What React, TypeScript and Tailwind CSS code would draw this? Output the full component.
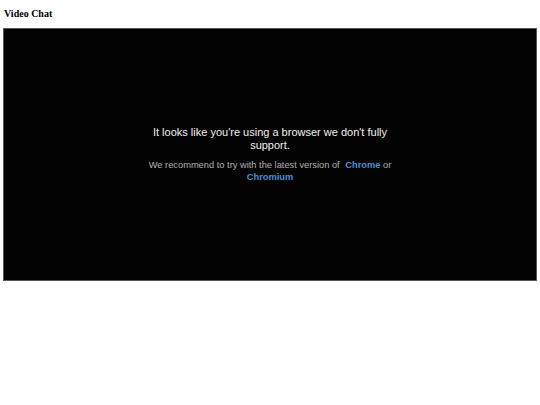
export default function App() {
  return (
    <div className="bg-white w-[540px] h-[405px] px-[3px]" style={{ fontFamily: '"Liberation Serif", serif' }}>
      <h1 className="text-[10px] font-bold text-black h-[28px] pt-[8px] leading-[12px] pl-[1px]">Video Chat</h1>
      <div className="h-[253px] w-[534px] bg-[#030303] border border-[#555] flex items-center justify-center">
        <div className="w-[250px] text-center" style={{ fontFamily: '"Liberation Sans", Arial, sans-serif' }}>
          <p className="text-[11px] leading-[13px] text-[#f0f0f0]">
            It looks like you're using a browser we don't fully support.
          </p>
          <p className="mt-[7px] text-[9.3px] leading-[12px] text-[#b0b0b0]">
            We recommend to try with the latest version of{" "}
            <a className="ml-[3px] font-bold text-[#4a8fd9]">Chrome</a> or{" "}
            <a className="font-bold text-[#4a8fd9]">Chromium</a>
          </p>
        </div>
      </div>
    </div>
  );
}
